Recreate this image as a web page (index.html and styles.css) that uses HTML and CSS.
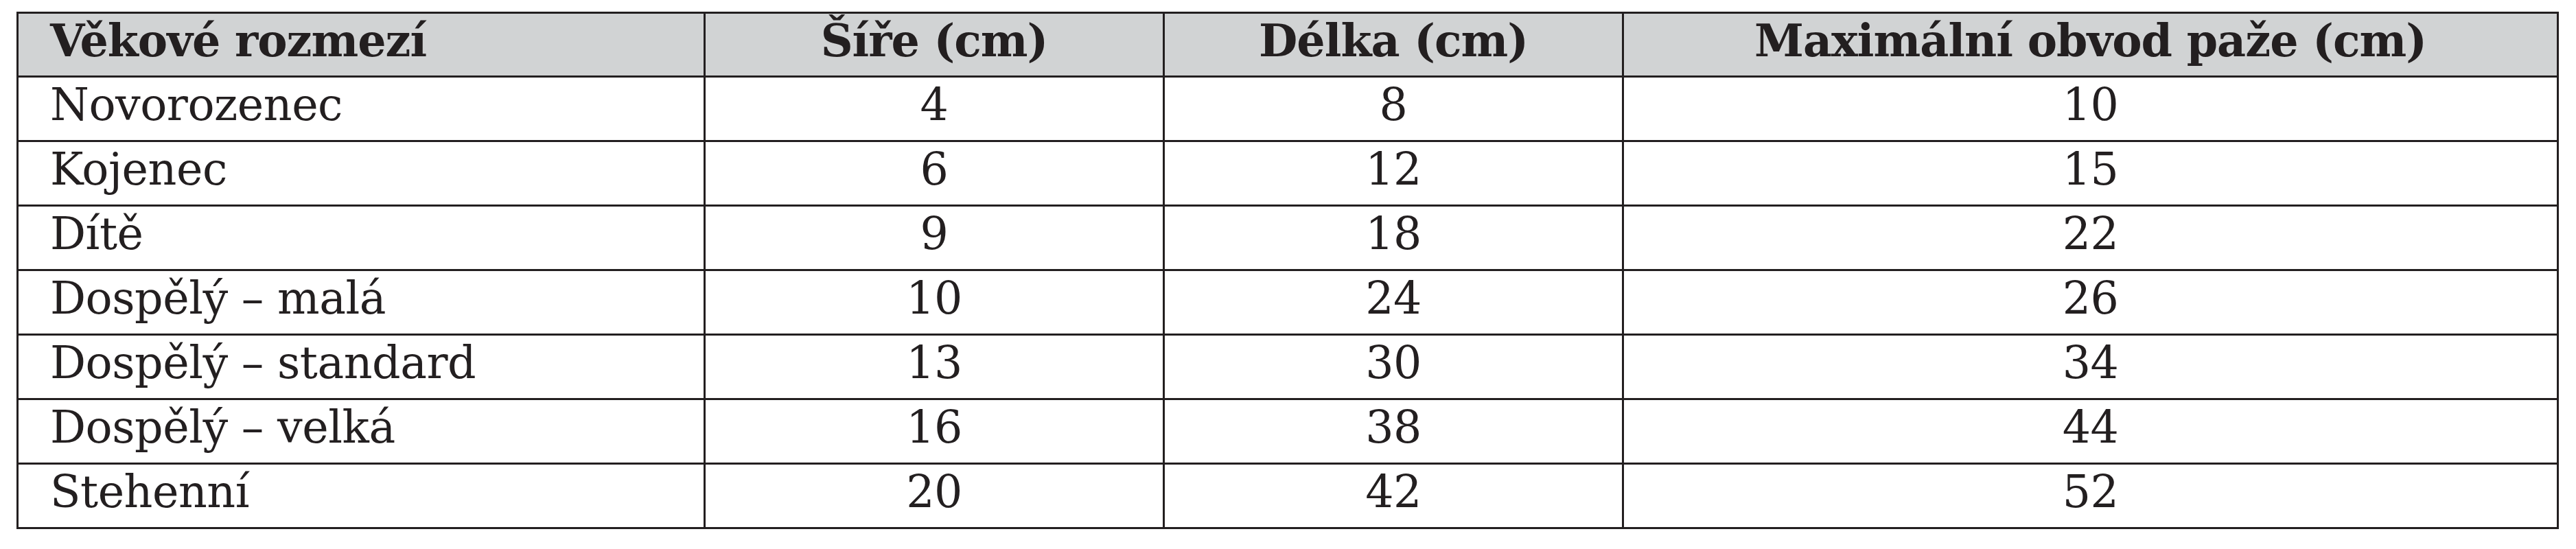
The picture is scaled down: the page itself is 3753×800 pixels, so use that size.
FILE: index.html
```html
<!DOCTYPE html>
<html lang="cs">
<head>
<meta charset="utf-8">
<title>Velikosti manžet</title>
<link rel="stylesheet" href="styles.css">
</head>
<body>
<table class="cuffs">
  <colgroup>
    <col class="c-age">
    <col class="c-num">
    <col class="c-num">
    <col class="c-max">
  </colgroup>
  <thead>
    <tr>
      <th class="left">Věkové rozmezí</th>
      <th>Šíře (cm)</th>
      <th>Délka (cm)</th>
      <th>Maximální obvod paže (cm)</th>
    </tr>
  </thead>
  <tbody>
    <tr><td class="left">Novorozenec</td><td>4</td><td>8</td><td>10</td></tr>
    <tr><td class="left">Kojenec</td><td>6</td><td>12</td><td>15</td></tr>
    <tr><td class="left">Dítě</td><td>9</td><td>18</td><td>22</td></tr>
    <tr><td class="left">Dospělý – malá</td><td>10</td><td>24</td><td>26</td></tr>
    <tr><td class="left">Dospělý – standard</td><td>13</td><td>30</td><td>34</td></tr>
    <tr><td class="left">Dospělý – velká</td><td>16</td><td>38</td><td>44</td></tr>
    <tr><td class="left">Stehenní</td><td>20</td><td>42</td><td>52</td></tr>
  </tbody>
</table>
</body>
</html>
```

FILE: styles.css
```css
html, body {
  margin: 0;
  padding: 0;
  background: #ffffff;
}

.cuffs {
  margin: 17px 0 0 24px;
  width: 3701px;
  table-layout: fixed;
  border-collapse: collapse;
  font-family: "DejaVu Serif", "Liberation Serif", serif;
  font-size: 65px;
  letter-spacing: -0.5px;
  color: #231f20;
}

.c-age { width: 1001px; }
.c-num { width: 669px; }
.c-max { width: 1362px; }

.cuffs th,
.cuffs td {
  border: 3px solid #231f20;
  padding: 0 0 12px 0;
  height: 79px;
  line-height: 79px;
  text-align: center;
  vertical-align: top;
  white-space: nowrap;
}

.cuffs th {
  background: #d1d3d4;
  font-weight: bold;
  letter-spacing: -1px;
  padding-bottom: 11px;
}

.cuffs .left {
  text-align: left;
  padding-left: 46px;
}
```
